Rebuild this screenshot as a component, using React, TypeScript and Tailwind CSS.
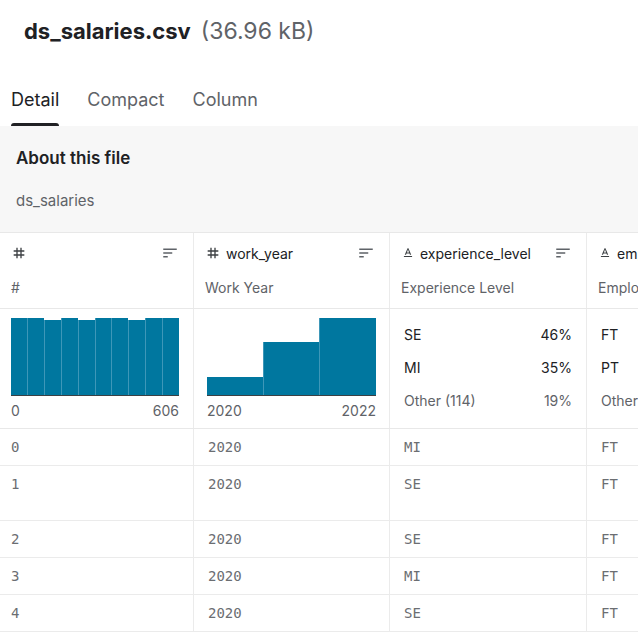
import React from "react";

const SortIcon = () => (
  <svg width="18" height="18" viewBox="0 0 24 24" fill="#5f6368">
    <path d="M3 18h6v-2H3v2zM3 6v2h18V6H3zm0 7h12v-2H3v2z" />
  </svg>
);

const HashIcon = () => (
  <svg width="16" height="16" viewBox="0 0 24 24" fill="#3c4043">
    <path d="M20 10V8h-4V4h-2v4h-4V4H8v4H4v2h4v4H4v2h4v4h2v-4h4v4h2v-4h4v-2h-4v-4h4zm-6 4h-4v-4h4v4z" />
  </svg>
);

const TextIcon = () => (
  <svg width="14" height="14" viewBox="0 0 24 24" fill="#3c4043">
    <path d="M5 17v2h14v-2H5zm4.5-4.2h5l.9 2.2h2.1L12.75 4h-1.5L6.5 15h2.1l.9-2.2zM12 5.98L13.87 11h-3.74L12 5.98z" />
  </svg>
);

const widths = ["w-[194px]", "w-[196px]", "w-[197px]", "w-[200px]"];

const columns = [
  { icon: "hash", name: "", label: "#" },
  { icon: "hash", name: "work_year", label: "Work Year" },
  { icon: "text", name: "experience_level", label: "Experience Level" },
  { icon: "text", name: "employment_type", label: "Employment Type" },
];

const rows = [
  { v: ["0", "2020", "MI", "FT"], tall: false },
  { v: ["1", "2020", "SE", "FT"], tall: true },
  { v: ["2", "2020", "SE", "FT"], tall: false },
  { v: ["3", "2020", "MI", "FT"], tall: false },
  { v: ["4", "2020", "SE", "FT"], tall: false },
];

const idBars = [77, 77, 75, 77, 75, 77, 77, 75, 77, 77];
const yearBars = [18, 53, 77];

const Histogram = ({ bars, min, max }: { bars: number[]; min: string; max: string }) => (
  <div className="flex flex-col">
    <div className="flex h-[77px] items-end border-b border-[#3c4043]">
      {bars.map((h, i) => (
        <div
          key={i}
          className={`flex-1 bg-[#00779f] ${i > 0 ? "border-l border-[#3e97b8]" : ""}`}
          style={{ height: h }}
        />
      ))}
    </div>
    <div className="mt-[5px] flex justify-between text-[14px] leading-5 text-[#5f6368]">
      <span>{min}</span>
      <span>{max}</span>
    </div>
  </div>
);

const CatList = ({ items }: { items: [string, string, boolean][] }) => (
  <div className="flex flex-col gap-[13px] pt-[8px]">
    {items.map(([k, p, muted]) => (
      <div key={k} className={`flex justify-between text-[14px] leading-5 ${muted ? "text-[#5f6368]" : "text-[#202124]"}`}>
        <span className="whitespace-nowrap">{k}</span>
        <span>{p}</span>
      </div>
    ))}
  </div>
);

export default function App() {
  return (
    <div className="h-[638px] w-[638px] overflow-hidden bg-white font-['Inter','Liberation_Sans',sans-serif]">
      {/* Title */}
      <div className="flex items-baseline gap-[10px] px-6 pt-[15px]">
        <h1 className="text-[22px] font-bold leading-8 text-[#202124]">ds_salaries.csv</h1>
        <span className="text-[23px] leading-8 text-[#5f6368]">(36.96 kB)</span>
      </div>

      {/* Tabs */}
      <div className="mt-[41px] flex gap-7 px-[11px]">
        <div className="flex flex-col">
          <span className="text-[18px] leading-6 text-[#202124]">Detail</span>
          <div className="mt-[11px] h-[3px] rounded-t bg-[#202124]" />
        </div>
        <span className="text-[18px] leading-6 text-[#5f6368]">Compact</span>
        <span className="text-[18px] leading-6 text-[#5f6368]">Column</span>
      </div>

      {/* About */}
      <div className="h-[107px] border-b border-[#e8e8e8] bg-[#f7f7f7] px-4 pt-[20px]">
        <h2 className="text-[17px] font-semibold leading-6 text-[#202124]">About this file</h2>
        <p className="mt-[21px] text-[15px] leading-5 text-[#5f6368]">ds_salaries</p>
      </div>

      {/* Table header */}
      <div className="flex w-[800px] border-b border-[#e8e8e8]">
        {columns.map((c, i) => (
          <div key={i} className={`${widths[i]} shrink-0 border-r border-[#ebebeb] pb-[10px] pl-[11px] pr-[14px] pt-[10px]`}>
            <div className="flex h-5 items-center justify-between">
              <div className="flex items-center gap-[5px] text-[14px] text-[#202124]">
                {c.icon === "hash" ? <HashIcon /> : <TextIcon />}
                <span className="whitespace-nowrap">{c.name}</span>
              </div>
              <SortIcon />
            </div>
            <div className="mt-[15px] whitespace-nowrap text-[14px] leading-5 text-[#5f6368]">{c.label}</div>
          </div>
        ))}
      </div>

      {/* Column summaries */}
      <div className="flex h-[120px] w-[800px] border-b border-[#e8e8e8]">
        <div className={`${widths[0]} shrink-0 border-r border-[#ebebeb] pl-[11px] pr-[14px] pt-[10px]`}>
          <Histogram bars={idBars} min="0" max="606" />
        </div>
        <div className={`${widths[1]} shrink-0 border-r border-[#ebebeb] pl-[13px] pr-[13px] pt-[10px]`}>
          <Histogram bars={yearBars} min="2020" max="2022" />
        </div>
        <div className={`${widths[2]} shrink-0 border-r border-[#ebebeb] pl-[14px] pr-[14px] pt-[8px]`}>
          <CatList items={[["SE", "46%", false], ["MI", "35%", false], ["Other (114)", "19%", true]]} />
        </div>
        <div className={`${widths[3]} shrink-0 border-r border-[#ebebeb] pl-[14px] pr-[14px] pt-[8px]`}>
          <CatList items={[["FT", "97%", false], ["PT", "2%", false], ["Other (10)", "1%", true]]} />
        </div>
      </div>

      {/* Rows */}
      {rows.map((r, ri) => (
        <div key={ri} className={`flex w-[800px] border-b border-[#ebebeb] ${r.tall ? "h-[55px]" : "h-[37px]"}`}>
          {r.v.map((v, ci) => (
            <div
              key={ci}
              className={`${widths[ci]} shrink-0 border-r border-[#ebebeb] ${ci === 0 ? "pl-[11px]" : "pl-[14px]"} pt-[8px] font-['DejaVu_Sans_Mono',monospace] text-[14px] leading-5 text-[#6b6e72]`}
            >
              {v}
            </div>
          ))}
        </div>
      ))}
    </div>
  );
}
